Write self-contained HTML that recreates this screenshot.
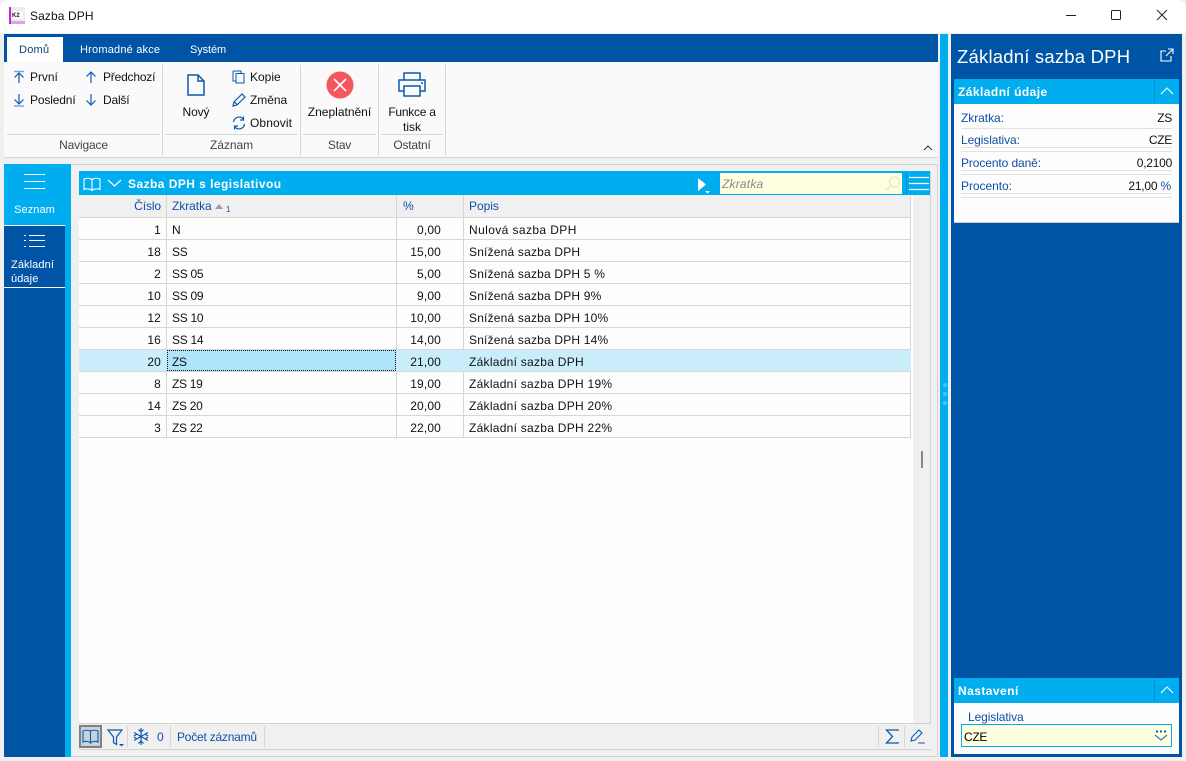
<!DOCTYPE html>
<html><head><meta charset="utf-8"><style>
html,body{margin:0;padding:0;background:#e8e8e8}
#w{position:relative;width:1186px;height:761px;overflow:hidden;background:#f0f0f0;font:12px "Liberation Sans",sans-serif;color:#111;letter-spacing:0}
#w div,#w svg{position:absolute}
.t{white-space:nowrap;line-height:14px}
.b{color:#0f4fa8}
.c{text-align:center}
.r{text-align:right}
.hl{background:#d6d6d6}
.n{letter-spacing:.15px}
.k{letter-spacing:-.3px}
.s{letter-spacing:.19px}
.z{letter-spacing:.27px}
svg{fill:none;stroke:#0a5ab0;stroke-width:1.2}
</style></head><body><div id="w">
<div style="left:0;top:0;width:1186px;height:33px;background:#fff;border-radius:8px 8px 0 0"></div>
<svg style="left:9px;top:7px;width:16px;height:17px;stroke:none" viewBox="0 0 16 17"><rect width="16" height="17" fill="#f4e6f4"/><rect width="2" height="17" fill="#c22fc0"/><rect x="2" y="14" width="14" height="3" fill="#d9a5e8"/><rect x="3" y="4" width="11" height="8" fill="#fff"/></svg>
<div class="t" style="left:12px;top:9px;font-size:6px;font-weight:bold;color:#222">K2</div>
<div class="t" style="left:30px;top:9px;letter-spacing:.1px">Sazba DPH</div>
<svg style="left:1060px;top:7px;width:110px;height:16px;stroke:#222;stroke-width:1" viewBox="0 0 110 16"><path d="M6 8.500H16"/><rect x="51.500" y="3.500" width="9" height="9" rx="1"/><path d="M97 3L107 13M107 3L97 13"/></svg>

<div style="left:4px;top:34px;width:934px;height:28px;background:#0054a6"></div>
<div style="left:7px;top:37px;width:56px;height:25px;background:#fff"></div>
<div class="t" style="left:19px;top:43px;font-size:11px;letter-spacing:.25px;color:#0b3f7e">Domů</div>
<div class="t" style="left:80px;top:43px;font-size:11px;letter-spacing:.2px;color:#fff">Hromadné akce</div>
<div class="t" style="left:190px;top:43px;font-size:11px;letter-spacing:-.1px;color:#fff">Systém</div>
<div style="left:4px;top:62px;width:934px;height:95px;background:#fafafa"></div>
<div class="hl" style="left:4px;top:157px;width:934px;height:1px"></div>
<div class="hl" style="left:162px;top:65px;width:1px;height:90px"></div>
<div class="hl" style="left:300px;top:65px;width:1px;height:90px"></div>
<div class="hl" style="left:378px;top:65px;width:1px;height:90px"></div>
<div class="hl" style="left:445px;top:65px;width:1px;height:90px"></div>
<div class="hl" style="left:7px;top:134px;width:153px;height:1px"></div>
<div class="hl" style="left:165px;top:134px;width:133px;height:1px"></div>
<div class="hl" style="left:303px;top:134px;width:73px;height:1px"></div>
<div class="hl" style="left:381px;top:134px;width:62px;height:1px"></div>
<svg style="left:12px;top:70px;width:14px;height:14px" viewBox="0 0 14 14"><path d="M2 1.500H12" stroke="#7aa6d4" stroke-width="1.500"/><path d="M7 13V3M2.500 7.500L7 3L11.500 7.500"/></svg>
<svg style="left:12px;top:93px;width:14px;height:14px" viewBox="0 0 14 14"><path d="M7 1V11M2.500 6.500L7 11L11.500 6.500"/><path d="M2 13H12" stroke="#7aa6d4" stroke-width="1.500"/></svg>
<svg style="left:85px;top:70px;width:12px;height:14px" viewBox="0 0 12 14"><path d="M6 13V2M1.500 6.500L6 2L10.500 6.500"/></svg>
<svg style="left:85px;top:93px;width:12px;height:14px" viewBox="0 0 12 14"><path d="M6 1V12M1.500 7.500L6 12L10.500 7.500"/></svg>
<div class="t" style="left:30px;top:70px;letter-spacing:-.05px">První</div>
<div class="t" style="left:30px;top:93px;letter-spacing:-.15px">Poslední</div>
<div class="t" style="left:103px;top:70px;letter-spacing:-.2px">Předchozí</div>
<div class="t" style="left:103px;top:93px;letter-spacing:-.2px">Další</div>
<div class="t c" style="left:7px;top:138px;width:153px;color:#444;letter-spacing:-.15px">Navigace</div>
<svg style="left:187px;top:74px;width:18px;height:22px;stroke-width:1.500" viewBox="0 0 18 22"><path d="M1 1H11L17 7V21H1ZM11 1V7H17"/></svg>
<div class="t c" style="left:165px;top:105px;width:62px;letter-spacing:-.1px">Nový</div>
<svg style="left:232px;top:70px;width:14px;height:14px" viewBox="0 0 14 14"><path d="M1 1H9V3M4 3.500H12V13H4ZM4 11H1V1" stroke-width="1"/></svg>
<svg style="left:232px;top:93px;width:14px;height:14px" viewBox="0 0 14 14"><path d="M1 13L2 9L10 1L13 4L5 12ZM2.500 9L5 11.500"/></svg>
<svg style="left:232px;top:116px;width:14px;height:14px" viewBox="0 0 14 14"><path d="M1.500 6A5.500 5.500 0 0 1 11.500 3.500M12.500 8A5.500 5.500 0 0 1 2.500 10.500M11.500 .5V4H8M2.500 13.500V10H6"/></svg>
<div class="t" style="left:250px;top:70px">Kopie</div>
<div class="t" style="left:250px;top:93px;letter-spacing:-.05px">Změna</div>
<div class="t" style="left:250px;top:116px;letter-spacing:.1px">Obnovit</div>
<div class="t c" style="left:165px;top:138px;width:133px;color:#444;letter-spacing:-.05px">Záznam</div>
<svg style="left:326px;top:71px;width:28px;height:28px;stroke:#fff;stroke-width:1.600" viewBox="0 0 28 28"><circle cx="14" cy="14" r="13.500" fill="#f4575e" stroke="none"/><path d="M8 8L20 20M20 8L8 20"/></svg>
<div class="t c" style="left:301px;top:105px;width:77px;letter-spacing:0">Zneplatnění</div>
<div class="t c" style="left:303px;top:138px;width:73px;color:#444;letter-spacing:-.2px">Stav</div>
<svg style="left:398px;top:72px;width:28px;height:26px;stroke-width:1.500" viewBox="0 0 28 26"><path d="M6 8V1H22V8M6 19H1V8H27V19H22M6 14H22V24H6Z"/><path d="M23 11H25"/></svg>
<div class="t c" style="left:379px;top:105px;width:66px;letter-spacing:-.25px">Funkce a</div>
<div class="t c" style="left:379px;top:120px;width:66px">tisk</div>
<div class="t c" style="left:381px;top:138px;width:62px;color:#444;letter-spacing:-.2px">Ostatní</div>
<svg style="left:923px;top:144px;width:10px;height:8px;stroke:#333;stroke-width:1" viewBox="0 0 10 8"><path d="M1 6L5 2L9 6"/></svg>

<div style="left:4px;top:164px;width:61px;height:593px;background:#0054a6"></div>
<div style="left:4px;top:164px;width:67px;height:61px;background:#00adef"></div>
<div style="left:65px;top:164px;width:6px;height:593px;background:#00adef"></div>
<div style="left:4px;top:287px;width:61px;height:1px;background:#fff"></div>
<div style="left:4px;top:225px;width:61px;height:1px;background:#fff"></div>
<svg style="left:24px;top:174px;width:21px;height:16px;stroke:#fff;stroke-width:1" viewBox="0 0 21 16"><path d="M0 .5H21M0 7.500H21M0 14.500H21"/></svg>
<div class="t c" style="left:4px;top:203px;width:61px;color:#fff;font-size:11px;letter-spacing:.05px">Seznam</div>
<svg style="left:24px;top:234px;width:21px;height:14px;stroke:#fff;stroke-width:1" viewBox="0 0 21 14"><path d="M5 1.500H21M5 6.500H21M5 12.500H21M0 1.500H2M0 6.500H2M0 12.500H2"/></svg>
<div class="t" style="left:11px;top:259px;color:#fff;font-size:11px;line-height:13.500px;letter-spacing:.1px">Základní<br>údaje</div>

<div style="left:71px;top:164px;width:867px;height:593px;border:1px solid #d2d2d2;border-left:0;box-sizing:border-box;background:#f0f0f0"></div>
<div style="left:79px;top:171px;width:852px;height:24px;background:#00adef"></div>
<svg style="left:83px;top:177px;width:18px;height:15px;stroke:#fff;stroke-width:1.100" viewBox="0 0 18 15"><path d="M9 2.500C7 1 3 1 1 2V12.500C3 11.500 7 11.500 9 13.500C11 11.500 15 11.500 17 12.500V2C15 1 11 1 9 2.500V13.500"/></svg>
<svg style="left:107px;top:179px;width:15px;height:9px;stroke:#fff;stroke-width:1.200" viewBox="0 0 15 9"><path d="M1 1L7.500 7L14 1"/></svg>
<div class="t" style="left:128px;top:177px;color:#fff;font-weight:bold;letter-spacing:.45px">Sazba DPH s legislativou</div>
<svg style="left:698px;top:178px;width:15px;height:17px;fill:#fff;stroke:none" viewBox="0 0 15 17"><path d="M0 0L8 6.500L0 13ZM7 13H12L9.500 15.500Z"/></svg>
<div style="left:720px;top:173px;width:182px;height:21px;background:#ffffe0"></div>
<div class="t" style="left:722px;top:177px;font-style:italic;color:#888;letter-spacing:.2px">Zkratka</div>
<svg style="left:885px;top:176px;width:16px;height:15px;stroke:#e2e6c8;stroke-width:1.200" viewBox="0 0 16 15"><circle cx="9.500" cy="6" r="5"/><path d="M6 10L1 14"/></svg>
<div style="left:906px;top:173px;width:1px;height:21px;background:#0090d0"></div>
<svg style="left:909px;top:176px;width:20px;height:15px;stroke:#fff;stroke-width:1.200" viewBox="0 0 20 15"><path d="M0 1.500H20M0 7.500H20M0 13.500H20"/></svg>

<div style="left:79px;top:195px;width:834px;height:528px;background:#fdfdfd"></div>
<div style="left:79px;top:195px;width:832px;height:22px;background:#f0f0f0"></div>
<div class="hl" style="left:79px;top:217px;width:832px;height:1px"></div>
<div class="hl" style="left:166px;top:195px;width:1px;height:243px"></div>
<div class="hl" style="left:396px;top:195px;width:1px;height:243px"></div>
<div class="hl" style="left:463px;top:195px;width:1px;height:243px"></div>
<div class="hl" style="left:910px;top:195px;width:1px;height:243px"></div>
<div class="t b r" style="left:79px;top:199px;width:82px;letter-spacing:-.1px">Číslo</div>
<div class="t b" style="left:172px;top:199px;letter-spacing:-.05px">Zkratka</div>
<svg style="left:215px;top:204px;width:8px;height:5px;fill:#99a;stroke:none" viewBox="0 0 8 5"><path d="M0 5L4 0L8 5Z"/></svg>
<div class="t b" style="left:226px;top:203px;font-size:8px">1</div>
<div class="t b" style="left:403px;top:199px">%</div>
<div class="t b" style="left:469px;top:199px;letter-spacing:-.05px">Popis</div>

<div class="hl" style="left:79px;top:239px;width:832px;height:1px"></div>
<div class="hl" style="left:79px;top:261px;width:832px;height:1px"></div>
<div class="hl" style="left:79px;top:283px;width:832px;height:1px"></div>
<div class="hl" style="left:79px;top:305px;width:832px;height:1px"></div>
<div class="hl" style="left:79px;top:327px;width:832px;height:1px"></div>
<div class="hl" style="left:79px;top:349px;width:832px;height:1px"></div>
<div class="hl" style="left:79px;top:371px;width:832px;height:1px"></div>
<div class="hl" style="left:79px;top:393px;width:832px;height:1px"></div>
<div class="hl" style="left:79px;top:415px;width:832px;height:1px"></div>
<div class="hl" style="left:79px;top:437px;width:832px;height:1px"></div>
<div style="left:79px;top:350px;width:832px;height:21px;background:#c9edfb"></div>
<div style="left:167px;top:350px;width:229px;height:21px;background:#aee5fb;outline:1px dotted #111;outline-offset:-1px"></div>

<div class="t r n" style="left:79px;top:223px;width:82px">1</div><div class="t k" style="left:172px;top:223px">N</div><div class="t r n" style="left:397px;top:223px;width:44px">0,00</div><div class="t" style="left:469px;top:223px;letter-spacing:.4px">Nulová sazba DPH</div>
<div class="t r n" style="left:79px;top:245px;width:82px">18</div><div class="t k" style="left:172px;top:245px">SS</div><div class="t r n" style="left:397px;top:245px;width:44px">15,00</div><div class="t s" style="left:469px;top:245px">Snížená sazba DPH</div>
<div class="t r n" style="left:79px;top:267px;width:82px">2</div><div class="t k" style="left:172px;top:267px">SS 05</div><div class="t r n" style="left:397px;top:267px;width:44px">5,00</div><div class="t s" style="left:469px;top:267px">Snížená sazba DPH 5 %</div>
<div class="t r n" style="left:79px;top:289px;width:82px">10</div><div class="t k" style="left:172px;top:289px">SS 09</div><div class="t r n" style="left:397px;top:289px;width:44px">9,00</div><div class="t s" style="left:469px;top:289px">Snížená sazba DPH 9%</div>
<div class="t r n" style="left:79px;top:311px;width:82px">12</div><div class="t k" style="left:172px;top:311px">SS 10</div><div class="t r n" style="left:397px;top:311px;width:44px">10,00</div><div class="t s" style="left:469px;top:311px">Snížená sazba DPH 10%</div>
<div class="t r n" style="left:79px;top:333px;width:82px">16</div><div class="t k" style="left:172px;top:333px">SS 14</div><div class="t r n" style="left:397px;top:333px;width:44px">14,00</div><div class="t s" style="left:469px;top:333px">Snížená sazba DPH 14%</div>
<div class="t r n" style="left:79px;top:355px;width:82px">20</div><div class="t k" style="left:172px;top:355px">ZS</div><div class="t r n" style="left:397px;top:355px;width:44px">21,00</div><div class="t z" style="left:469px;top:355px">Základní sazba DPH</div>
<div class="t r n" style="left:79px;top:377px;width:82px">8</div><div class="t k" style="left:172px;top:377px">ZS 19</div><div class="t r n" style="left:397px;top:377px;width:44px">19,00</div><div class="t z" style="left:469px;top:377px">Základní sazba DPH 19%</div>
<div class="t r n" style="left:79px;top:399px;width:82px">14</div><div class="t k" style="left:172px;top:399px">ZS 20</div><div class="t r n" style="left:397px;top:399px;width:44px">20,00</div><div class="t z" style="left:469px;top:399px">Základní sazba DPH 20%</div>
<div class="t r n" style="left:79px;top:421px;width:82px">3</div><div class="t k" style="left:172px;top:421px">ZS 22</div><div class="t r n" style="left:397px;top:421px;width:44px">22,00</div><div class="t z" style="left:469px;top:421px">Základní sazba DPH 22%</div>

<div class="hl" style="left:930px;top:171px;width:1px;height:579px"></div>
<div style="left:921px;top:451px;width:2px;height:17px;background:#888"></div>

<div style="left:79px;top:723px;width:852px;height:27px;background:#f0f0f0;border-top:1px solid #d2d2d2;border-bottom:1px solid #d2d2d2;box-sizing:border-box"></div>
<div style="left:79px;top:725px;width:23px;height:23px;background:#c8d2dc;box-shadow:inset 0 0 0 2px #808080"></div>
<svg style="left:82px;top:729px;width:17px;height:15px;stroke-width:1.100" viewBox="0 0 17 15"><path d="M8.500 2C7 1 3 1 1 2V13C3 12 7 12 8.500 14C10 12 14 12 16 13V2C14 1 10 1 8.500 2V14"/></svg>
<svg style="left:107px;top:729px;width:19px;height:18px;stroke-width:1.200" viewBox="0 0 19 18"><path d="M1 1H15L9.500 8V15.500L6.500 13.500V8Z"/><path d="M12 15H17L14.500 17.500Z" fill="#0a5ab0" stroke="none"/></svg>
<div class="hl" style="left:127px;top:726px;width:1px;height:21px"></div>
<svg style="left:133px;top:728px;width:16px;height:17px;stroke-width:1.200" viewBox="0 0 16 17"><path d="M8 0V17M1 4.500L15 12.500M15 4.500L1 12.500M5.500 1.500L8 4L10.500 1.500M5.500 15.500L8 13L10.500 15.500M1 8L4 6M15 8L12 6M1 9L4 11M15 9L12 11"/></svg>
<div class="t b" style="left:157px;top:730px">0</div>
<div class="hl" style="left:170px;top:726px;width:1px;height:21px"></div>
<div class="t b" style="left:177px;top:730px;letter-spacing:-.22px">Počet záznamů</div>
<div class="hl" style="left:264px;top:726px;width:1px;height:21px"></div>
<div class="hl" style="left:878px;top:726px;width:1px;height:21px"></div>
<div class="hl" style="left:904px;top:726px;width:1px;height:21px"></div>
<svg style="left:885px;top:729px;width:14px;height:15px;stroke-width:1.300" viewBox="0 0 14 15"><path d="M13 2V1H1.500L7.500 7.500L1.500 14H13V13"/></svg>
<svg style="left:910px;top:729px;width:16px;height:15px;stroke-width:1.100" viewBox="0 0 16 15"><path d="M1 12L2 8L9 1L12 4L5 11ZM8 14H15"/></svg>

<div style="left:940px;top:34px;width:8px;height:723px;background:#00adef"></div>
<div style="left:942.500px;top:383px;width:4px;height:4px;border-radius:2px;background:#45c5f5"></div>
<div style="left:942.500px;top:392px;width:4px;height:4px;border-radius:2px;background:#45c5f5"></div>
<div style="left:942.500px;top:401px;width:4px;height:4px;border-radius:2px;background:#45c5f5"></div>
<div style="left:951px;top:34px;width:231px;height:723px;background:#0054a6"></div>
<div class="t" style="left:957px;top:46px;font-size:18.500px;line-height:22px;color:#fff;letter-spacing:.2px">Základní sazba DPH</div>
<svg style="left:1160px;top:48px;width:14px;height:14px;stroke:#fff;stroke-width:1.100" viewBox="0 0 14 14"><path d="M6 3H1V13H11V8M8 1H13V6M13 1L6 8"/></svg>
<div style="left:954px;top:79px;width:225px;height:25px;background:#00adef"></div>
<div class="t" style="left:958px;top:85px;color:#fff;font-weight:bold;letter-spacing:.45px">Základní údaje</div>
<div style="left:1154px;top:81px;width:1px;height:21px;background:#0090d0"></div>
<svg style="left:1160px;top:87px;width:14px;height:8px;stroke:#fff;stroke-width:1.100" viewBox="0 0 14 8"><path d="M1 7L7 1L13 7"/></svg>
<div style="left:954px;top:104px;width:225px;height:119px;background:#fdfdfd;border-bottom:1px solid #ccc;box-sizing:border-box"></div>
<div class="t b" style="left:961px;top:111px;letter-spacing:-.05px">Zkratka:</div><div class="t r" style="left:1060px;top:111px;width:112px;letter-spacing:-.3px">ZS</div>
<div class="t b" style="left:961px;top:133px;letter-spacing:-.1px">Legislativa:</div><div class="t r" style="left:1060px;top:133px;width:112px;letter-spacing:-.3px">CZE</div>
<div class="t b" style="left:961px;top:156px;letter-spacing:-.1px">Procento daně:</div><div class="t r" style="left:1060px;top:156px;width:112px;letter-spacing:-.25px">0,2100</div>
<div class="t b" style="left:961px;top:179px;letter-spacing:-.05px">Procento:</div><div class="t r" style="left:1060px;top:179px;width:111px;letter-spacing:-.2px">21,00 <span style="color:#0f4fa8">%</span></div>
<div style="left:961px;top:128px;width:211px;height:1px;background:#e2e2e2"></div>
<div style="left:961px;top:147px;width:211px;height:1px;background:#e2e2e2"></div>
<div style="left:961px;top:151px;width:211px;height:1px;background:#e2e2e2"></div>
<div style="left:961px;top:170px;width:211px;height:1px;background:#e2e2e2"></div>
<div style="left:961px;top:174px;width:211px;height:1px;background:#e2e2e2"></div>
<div style="left:961px;top:193px;width:211px;height:1px;background:#e2e2e2"></div>
<div style="left:961px;top:197px;width:211px;height:1px;background:#e2e2e2"></div>

<div style="left:954px;top:678px;width:225px;height:25px;background:#00adef"></div>
<div class="t" style="left:958px;top:684px;color:#fff;font-weight:bold;letter-spacing:.45px">Nastavení</div>
<div style="left:1154px;top:680px;width:1px;height:21px;background:#0090d0"></div>
<svg style="left:1160px;top:686px;width:14px;height:8px;stroke:#fff;stroke-width:1.100" viewBox="0 0 14 8"><path d="M1 7L7 1L13 7"/></svg>
<div style="left:954px;top:703px;width:225px;height:51px;background:#fdfdfd"></div>
<div class="t b" style="left:968px;top:710px;letter-spacing:-.1px">Legislativa</div>
<div style="left:961px;top:724px;width:211px;height:23px;background:#ffffe0;border:1px solid #00adef;box-sizing:border-box"></div>
<div class="t" style="left:964px;top:730px;color:#000;letter-spacing:-.3px">CZE</div>
<svg style="left:1154px;top:730px;width:14px;height:12px;stroke-width:1" viewBox="0 0 14 12"><path d="M2 1.500H4M6 1.500H8M10 1.500H12" stroke-width="2"/><path d="M1 5L7 10L13 5"/></svg>
</div></body></html>
